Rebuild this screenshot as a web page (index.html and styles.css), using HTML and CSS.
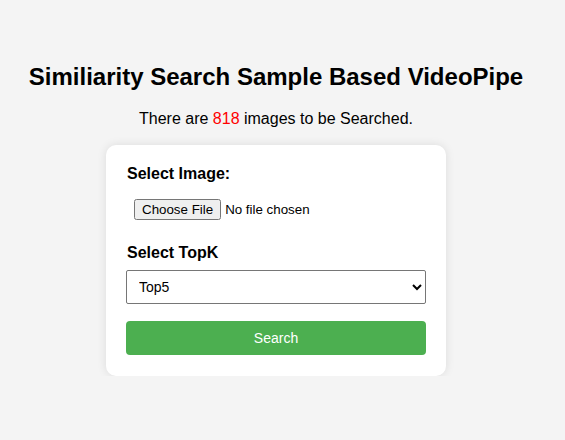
FILE: index.html
```html
<!DOCTYPE html>
<html>
<head>
<meta charset="utf-8">
<link rel="stylesheet" href="styles.css">
</head>
<body>
<div class="page">
  <h1 class="title">Similiarity Search Sample Based VideoPipe</h1>
  <p class="count">There are <span class="num">818</span> images to be Searched.</p>
  <form class="card">
    <label class="label" for="img">Select Image:</label>
    <input class="file" id="img" type="file">
    <label class="label" for="topk">Select TopK</label>
    <select class="select" id="topk">
      <option>Top5</option>
      <option>Top10</option>
      <option>Top20</option>
    </select>
    <button class="btn" type="button">Search</button>
  </form>
</div>
</body>
</html>
```
FILE: styles.css
```css
html, body {
  margin: 0;
  padding: 0;
  background: #f4f4f4;
  font-family: "Liberation Sans", Arial, sans-serif;
}
.page {
  width: 552px;
  display: flex;
  flex-direction: column;
  align-items: center;
  padding-top: 47px;
}
.title {
  font-size: 24px;
  font-weight: bold;
  margin: 16px 0 19px;
  color: #000;
}
.count {
  font-size: 16px;
  margin: 0 0 17px;
  color: #000;
}
.num {
  color: red;
}
.card {
  width: 300px;
  background: #fff;
  padding: 20px 20px 21px;
  border-radius: 10px;
  box-shadow: 0 0 10px rgba(0, 0, 0, 0.1);
  display: flex;
  flex-direction: column;
}
.label {
  display: block;
  font-size: 16px;
  font-weight: bold;
  margin-bottom: 8px;
  padding-left: 1px;
}
.file {
  padding: 8px;
  margin-bottom: 16px;
  font-size: 13.333px;
  font-family: "Liberation Sans", Arial, sans-serif;
}
.select {
  width: 100%;
  height: 34px;
  padding: 0 8px;
  font-size: 14px;
  font-family: "Liberation Sans", Arial, sans-serif;
  border: 1px solid #767676;
  border-radius: 2px;
  background: #fff;
  margin-bottom: 17px;
}
.btn {
  width: 100%;
  height: 34px;
  background: #4caf50;
  color: #fff;
  border: none;
  border-radius: 4px;
  font-size: 14px;
  font-family: "Liberation Sans", Arial, sans-serif;
}
```
